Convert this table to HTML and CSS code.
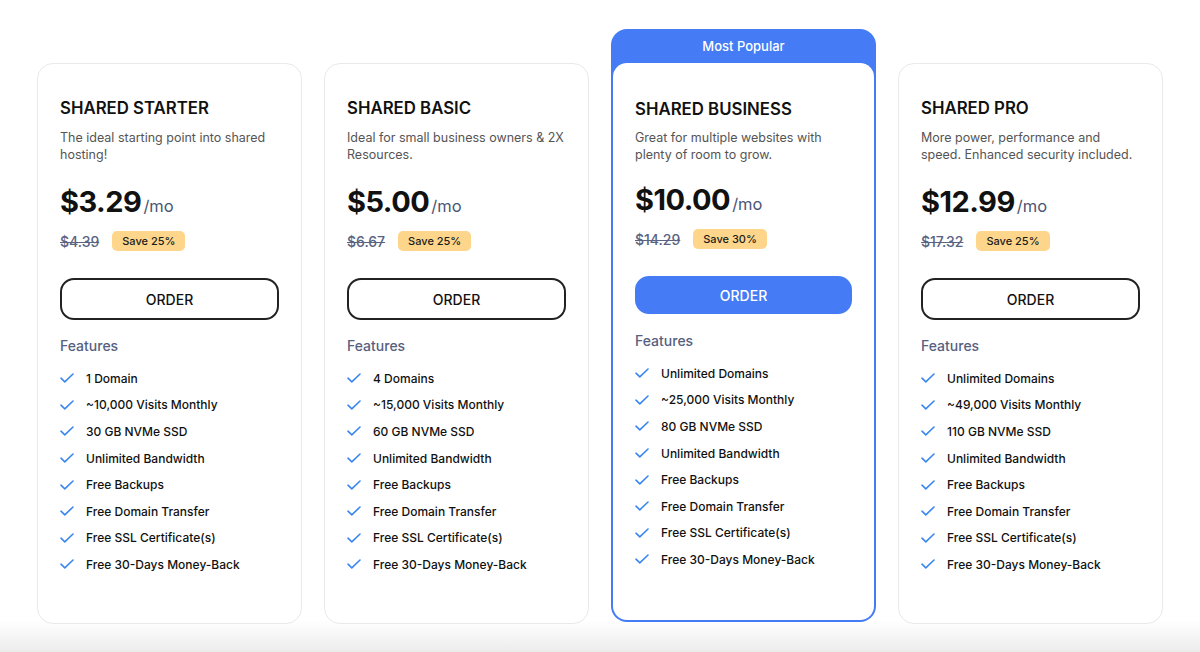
FILE: index.html
```html
<!DOCTYPE html>
<html lang="en">
<head>
<meta charset="utf-8">
<title>Shared Hosting Plans</title>
<link rel="stylesheet" href="styles.css">
</head>
<body>
<svg width="0" height="0" class="defs">
  <symbol id="chk" viewBox="0 0 14 10"><path d="M1 5.2 L4.8 8.8 L13 1" fill="none" stroke="currentColor" stroke-width="1.6" stroke-linecap="round" stroke-linejoin="round"/></symbol>
</svg>
<main class="plans">
  <section class="card">
    <h2 class="title">SHARED STARTER</h2>
    <p class="desc">The ideal starting point into shared hosting!</p>
    <div class="price"><span class="amount">$3.29</span><span class="per">/mo</span></div>
    <div class="old"><s class="strike">$4.39</s><span class="badge">Save 25%</span></div>
    <button class="order">ORDER</button>
    <h3 class="feat-title">Features</h3>
    <ul class="features">
      <li><svg class="check"><use href="#chk"/></svg>1 Domain</li>
      <li><svg class="check"><use href="#chk"/></svg>~10,000 Visits Monthly</li>
      <li><svg class="check"><use href="#chk"/></svg>30 GB NVMe SSD</li>
      <li><svg class="check"><use href="#chk"/></svg>Unlimited Bandwidth</li>
      <li><svg class="check"><use href="#chk"/></svg>Free Backups</li>
      <li><svg class="check"><use href="#chk"/></svg>Free Domain Transfer</li>
      <li><svg class="check"><use href="#chk"/></svg>Free SSL Certificate(s)</li>
      <li><svg class="check"><use href="#chk"/></svg>Free 30-Days Money-Back</li>
    </ul>
  </section>
  <section class="card">
    <h2 class="title">SHARED BASIC</h2>
    <p class="desc">Ideal for small business owners &amp; 2X Resources.</p>
    <div class="price"><span class="amount">$5.00</span><span class="per">/mo</span></div>
    <div class="old"><s class="strike">$6.67</s><span class="badge">Save 25%</span></div>
    <button class="order">ORDER</button>
    <h3 class="feat-title">Features</h3>
    <ul class="features">
      <li><svg class="check"><use href="#chk"/></svg>4 Domains</li>
      <li><svg class="check"><use href="#chk"/></svg>~15,000 Visits Monthly</li>
      <li><svg class="check"><use href="#chk"/></svg>60 GB NVMe SSD</li>
      <li><svg class="check"><use href="#chk"/></svg>Unlimited Bandwidth</li>
      <li><svg class="check"><use href="#chk"/></svg>Free Backups</li>
      <li><svg class="check"><use href="#chk"/></svg>Free Domain Transfer</li>
      <li><svg class="check"><use href="#chk"/></svg>Free SSL Certificate(s)</li>
      <li><svg class="check"><use href="#chk"/></svg>Free 30-Days Money-Back</li>
    </ul>
  </section>
  <section class="popular">
    <div class="pop-label">Most Popular</div>
    <div class="card card-pop">
      <h2 class="title">SHARED BUSINESS</h2>
      <p class="desc">Great for multiple websites with plenty of room to grow.</p>
      <div class="price"><span class="amount">$10.00</span><span class="per">/mo</span></div>
      <div class="old"><s class="strike">$14.29</s><span class="badge">Save 30%</span></div>
      <button class="order order-blue">ORDER</button>
      <h3 class="feat-title">Features</h3>
      <ul class="features">
        <li><svg class="check"><use href="#chk"/></svg>Unlimited Domains</li>
        <li><svg class="check"><use href="#chk"/></svg>~25,000 Visits Monthly</li>
        <li><svg class="check"><use href="#chk"/></svg>80 GB NVMe SSD</li>
        <li><svg class="check"><use href="#chk"/></svg>Unlimited Bandwidth</li>
        <li><svg class="check"><use href="#chk"/></svg>Free Backups</li>
        <li><svg class="check"><use href="#chk"/></svg>Free Domain Transfer</li>
        <li><svg class="check"><use href="#chk"/></svg>Free SSL Certificate(s)</li>
        <li><svg class="check"><use href="#chk"/></svg>Free 30-Days Money-Back</li>
      </ul>
    </div>
  </section>
  <section class="card">
    <h2 class="title">SHARED PRO</h2>
    <p class="desc">More power, performance and speed. Enhanced security included.</p>
    <div class="price"><span class="amount">$12.99</span><span class="per">/mo</span></div>
    <div class="old"><s class="strike">$17.32</s><span class="badge">Save 25%</span></div>
    <button class="order">ORDER</button>
    <h3 class="feat-title">Features</h3>
    <ul class="features">
      <li><svg class="check"><use href="#chk"/></svg>Unlimited Domains</li>
      <li><svg class="check"><use href="#chk"/></svg>~49,000 Visits Monthly</li>
      <li><svg class="check"><use href="#chk"/></svg>110 GB NVMe SSD</li>
      <li><svg class="check"><use href="#chk"/></svg>Unlimited Bandwidth</li>
      <li><svg class="check"><use href="#chk"/></svg>Free Backups</li>
      <li><svg class="check"><use href="#chk"/></svg>Free Domain Transfer</li>
      <li><svg class="check"><use href="#chk"/></svg>Free SSL Certificate(s)</li>
      <li><svg class="check"><use href="#chk"/></svg>Free 30-Days Money-Back</li>
    </ul>
  </section>
</main>
</body>
</html>
```
FILE: styles.css
```css
* { box-sizing: border-box; }
html, body { margin: 0; height: 652px; overflow: hidden; }
body {
  font-family: "Inter", "Noto Sans", sans-serif;
  color: #111;
  background: linear-gradient(to bottom, #ffffff 0, #ffffff 620px, #ececec 652px);
}
.defs { position: absolute; }
.plans {
  display: grid;
  grid-template-columns: repeat(4, 265px);
  column-gap: 22px;
  margin-left: 37px;
  padding-top: 29px;
  align-items: start;
}
.card {
  margin-top: 34px;
  height: 561px;
  background: #fff;
  border: 1px solid #e9e9e9;
  border-radius: 16px;
  padding: 33px 22px 0 22px;
}
.popular {
  height: 593px;
  background: #457cf6;
  border-radius: 16px;
  padding: 0 2px 2px 2px;
  display: flex;
  flex-direction: column;
}
.pop-label {
  height: 34px;
  color: #fff;
  font-size: 13px;
  font-weight: 500;
  text-align: center;
  line-height: 34px;
}
.card-pop {
  margin-top: 0;
  flex: 1;
  border: none;
  border-radius: 14px;
  padding: 35px 22px 0 22px;
}
.title {
  margin: 0;
  font-size: 16.8px;
  font-weight: 600;
  line-height: 22px;
}
.desc {
  margin: 10px 0 0;
  font-size: 12.5px;
  line-height: 17px;
  color: #555;
  height: 34px;
}
.card-pop .desc { margin-top: 9px; }
.price {
  margin-top: 21px;
  display: flex;
  align-items: baseline;
  height: 36px;
}
.card-pop .price { margin-top: 19px; }
.amount {
  font-size: 29px;
  font-weight: 700;
  letter-spacing: -0.5px;
}
.per {
  font-size: 16.5px;
  color: #4b5575;
  margin-left: 2px;
}
.old {
  margin-top: 10px;
  display: flex;
  align-items: center;
  gap: 13px;
  height: 22px;
}
.strike {
  font-size: 14px;
  font-weight: 500;
  color: #5a6382;
}
.badge {
  background: #fdd68b;
  border-radius: 5px;
  font-size: 11px;
  font-weight: 500;
  padding: 3px 10px;
  color: #1a1a1a;
}
.order {
  display: block;
  width: 100%;
  margin-top: 26px;
  height: 42px;
  border: 2px solid #222;
  border-radius: 14px;
  background: #fff;
  font-family: inherit;
  font-size: 14px;
  font-weight: 500;
  color: #111;
  cursor: pointer;
}
.order-blue {
  background: #457cf6;
  border-color: #457cf6;
  color: #fff;
  height: 38px;
  margin-top: 26px;
}
.feat-title {
  margin: 17px 0 0;
  font-size: 14px;
  font-weight: 500;
  color: #56607f;
  line-height: 18px;
}
.card-pop .feat-title { margin-top: 18px; }
.features {
  list-style: none;
  margin: 10px 0 0;
  padding: 0;
}
.features li {
  display: flex;
  align-items: center;
  height: 26.6px;
  font-size: 12px;
  font-weight: 500;
  color: #111;
}
.check {
  width: 14px;
  height: 10px;
  color: #3a86f0;
  margin-right: 12px;
  flex: none;
}
```
